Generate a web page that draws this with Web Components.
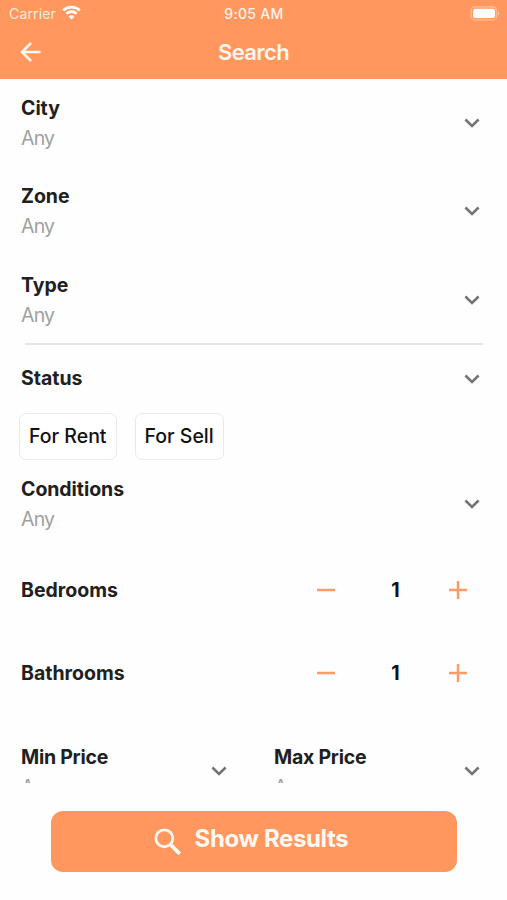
<!DOCTYPE html>
<html lang="en">
<head>
<meta charset="utf-8">
<title>Search</title>
<style>
  html, body { margin: 0; height: 100%; background: #fefefe; }
  body { font-family: Inter, "Liberation Sans", sans-serif; overflow: hidden; }
</style>
</head>
<body>
<search-screen></search-screen>
<script>
const define = (name, html) => {
  const template = document.createElement('template');
  template.innerHTML = html;
  customElements.define(name, class extends HTMLElement {
    constructor() {
      super();
      this.attachShadow({ mode: 'open' }).append(template.content.cloneNode(true));
    }
  });
};

define('chevron-icon', `
  <style>:host{display:block;width:16px;height:10px} svg{display:block}</style>
  <svg width="16" height="10" viewBox="0 0 16 10" fill="none" stroke="#737373" stroke-width="2.5"><path d="M1.4 1.5 8 7.9 14.6 1.5"/></svg>`);

define('status-bar', `
  <style>
    :host{display:grid;grid-template-columns:1fr auto 1fr;align-items:center;height:27px;padding:0 7px 0 9px;box-sizing:border-box;color:#fff;font-size:14px;line-height:27px}
    .left{display:flex;align-items:center;gap:6px;color:#ffe9dc;letter-spacing:.15px}
    .left svg{margin-top:-2px}
    .time{font-weight:500;font-size:14px;letter-spacing:.3px;color:#fff4ee;padding-right:1px}
    .battery{justify-self:end}
    svg{display:block}
  </style>
  <div class="left"><span>Carrier</span>
    <svg width="19" height="15" viewBox="0 0 19 15" fill="none" stroke="#fff" stroke-width="2.7"><path d="M1.2 5.4C5.8.9 13.2.9 17.8 5.4"/><path d="M4.4 8.8c2.9-2.8 7.3-2.8 10.2 0"/><path d="M9.5 14.4 6.5 11.4c1.7-1.5 4.3-1.5 6 0z" fill="#fff" stroke="none"/></svg>
  </div>
  <div class="time">9:05 AM</div>
  <svg class="battery" width="30" height="15" viewBox="0 0 30 15"><rect x="1.1" y=".9" width="25.4" height="13" rx="4" fill="none" stroke="#ffb68f" stroke-width="1.6"/><rect x="3" y="2.8" width="22" height="9.3" rx="2.3" fill="#fff"/><path d="M28 5.5c1.6.7 1.6 3.3 0 4z" fill="#ffc7a8"/></svg>`);

define('nav-bar', `
  <style>
    :host{display:grid;grid-template-columns:1fr auto 1fr;align-items:center;height:52px;padding:0 20px;box-sizing:border-box;color:#fff6f0;font-size:22px;font-weight:600}
    svg{display:block;margin-top:-2px}
    .title{line-height:50px;height:52px;letter-spacing:-.6px}
  </style>
  <svg width="21" height="20" viewBox="0 0 21 20" fill="none" stroke="#fff6f0" stroke-width="2.5"><path d="M20.5 10H2.2M11 1 2 10l9 9"/></svg>
  <div class="title"><slot></slot></div>`);

define('select-row', `
  <style>
    :host{display:flex;align-items:center;justify-content:space-between;height:60px}
    .text{padding-top:var(--text-drop,0px)}
    .label,.value{line-height:30px;font-size:19.5px}
    .label{font-weight:650;color:#202020;letter-spacing:var(--label-spacing,-.05px)}
    .value{color:#a0a0a0;letter-spacing:-.8px}
  </style>
  <div class="text"><div class="label"><slot name="label"></slot></div><div class="value"><slot></slot></div></div>
  <chevron-icon></chevron-icon>`);

define('section-head', `
  <style>
    :host{display:flex;align-items:center;justify-content:space-between;height:30px;font-size:19.5px;font-weight:650;color:#202020}
    chevron-icon{margin-top:1px}
  </style>
  <span><slot></slot></span><chevron-icon></chevron-icon>`);

define('option-chip', `
  <style>
    :host{display:flex;align-items:center;justify-content:center;box-sizing:border-box;height:47px;padding:0 9px;border:1.5px solid #e9e9e9;border-radius:7px;background:#fff;font-size:19.5px;font-weight:500;color:#111;white-space:nowrap}
  </style><slot></slot>`);

define('count-row', `
  <style>
    :host{display:flex;align-items:center;justify-content:space-between;height:30px;font-size:19.5px;font-weight:650;color:#202020}
    .stepper{display:grid;grid-template-columns:18px 1fr 18px;align-items:center;width:150px;margin-right:13px}
    .count{text-align:center;color:#111;padding-left:7px;font-weight:700}
    svg{display:block}
  </style>
  <span class="label"><slot name="label"></slot></span>
  <div class="stepper">
    <svg width="18" height="18" viewBox="0 0 18 18" stroke="#fb9c68" stroke-width="2.5"><path d="M0 9h18"/></svg>
    <span class="count"><slot></slot></span>
    <svg width="18" height="18" viewBox="0 0 18 18" stroke="#fb9c68" stroke-width="2.5"><path d="M0 9h18M9 0v18"/></svg>
  </div>`);

define('results-button', `
  <style>
    :host{display:flex;align-items:center;justify-content:center;gap:13px;box-sizing:border-box;width:406px;height:61px;border-radius:12px;background:#ff975e;color:#fff8f3;font-size:24px;font-weight:700;white-space:nowrap;padding-right:5px}
    svg{display:block}
    span{line-height:30px;margin-top:-6px;letter-spacing:-.36px}
  </style>
  <svg width="28" height="28" viewBox="0 0 28 28" fill="none" stroke="#fff8f3"><circle cx="10.3" cy="10.3" r="8.5" stroke-width="2.8"/><path d="m16.8 16.8 9 9" stroke-width="3.8"/></svg>
  <span><slot></slot></span>`);

define('search-screen', `
  <style>
    :host{display:flex;flex-direction:column;width:507px;height:900px;background:#fefefe}
    header{background:#ff975e;height:79px;flex:none}
    main{height:704px;flex:none;overflow:hidden;box-sizing:border-box;padding:14px 27px 0 21px;display:flex;flex-direction:column}
    main > *{flex:none}
    .selects{display:grid;row-gap:28.4px}
    hr{width:458px;height:2px;margin:13px 0 0 4px;border:0;background:#e4e4e4}
    section-head{margin-top:18.5px}
    .chips{display:flex;gap:18px;margin:19.5px 0 0 -2px}
    .conditions{margin-top:14px}
    .rooms{display:grid;row-gap:53.3px;margin-top:41px}
    .prices{display:grid;grid-template-columns:206px 206px;column-gap:47px;margin-top:53px;--text-drop:1px;--label-spacing:-.25px}
    footer{padding-top:28px;display:flex;justify-content:center}
  </style>
  <header><status-bar></status-bar><nav-bar>Search</nav-bar></header>
  <main>
    <div class="selects">
      <select-row><span slot="label">City</span>Any</select-row>
      <select-row><span slot="label">Zone</span>Any</select-row>
      <select-row><span slot="label">Type</span>Any</select-row>
    </div>
    <hr>
    <section-head>Status</section-head>
    <div class="chips"><option-chip>For Rent</option-chip><option-chip>For Sell</option-chip></div>
    <select-row class="conditions"><span slot="label">Conditions</span>Any</select-row>
    <div class="rooms">
      <count-row><span slot="label">Bedrooms</span>1</count-row>
      <count-row><span slot="label">Bathrooms</span>1</count-row>
    </div>
    <div class="prices">
      <select-row><span slot="label">Min Price</span>Any</select-row>
      <select-row><span slot="label">Max Price</span>Any</select-row>
    </div>
  </main>
  <footer><results-button>Show Results</results-button></footer>`);
</script>
</body>
</html>
